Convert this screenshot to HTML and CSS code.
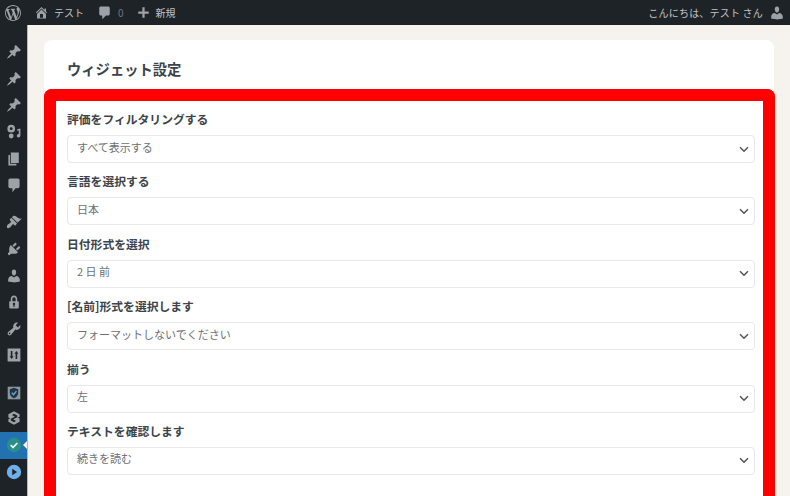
FILE: index.html
```html
<!DOCTYPE html>
<html lang="ja">
<head>
    <meta charset="UTF-8">
    <meta name="viewport" content="width=device-width, initial-scale=1.0">
    <title>ウィジェット設定</title>
    <link rel="stylesheet" href="styles.css">
</head>
<body>

    <header class="topbar">
        <div class="topbar-left">
            <svg class="wp-logo" viewBox="0 0 20 20"><path d="M20 10c0-5.51-4.49-10-10-10C4.48 0 0 4.49 0 10c0 5.52 4.48 10 10 10 5.51 0 10-4.48 10-10zM7.78 15.37L4.37 6.22c.55-.02 1.17-.08 1.17-.08.5-.06.44-1.13-.06-1.11 0 0-1.45.11-2.37.11-.18 0-.37 0-.58-.01C4.12 2.69 6.87 1.11 10 1.11c2.33 0 4.45.87 6.05 2.34-.68-.11-1.65.39-1.65 1.58 0 .74.45 1.36.9 2.1.35.61.55 1.36.55 2.46 0 1.49-1.4 5-1.4 5l-3.03-8.37c.54-.02.82-.17.82-.17.5-.05.44-1.25-.06-1.22 0 0-1.44.12-2.38.12-.87 0-2.33-.12-2.33-.12-.5-.03-.56 1.2-.06 1.22l.92.08 1.26 3.41zM17.41 10c.24-.64.74-1.87.43-4.25.7 1.29 1.05 2.71 1.05 4.25 0 3.29-1.73 6.24-4.4 7.78.97-2.59 1.94-5.2 2.92-7.78zM6.1 18.09C3.12 16.65 1.11 13.53 1.11 10c0-1.3.23-2.48.72-3.59C3.25 10.3 4.67 14.2 6.1 18.09zm4.03-6.63l2.58 6.98c-.86.29-1.76.45-2.71.45-.79 0-1.57-.11-2.29-.33.81-2.38 1.62-4.74 2.42-7.1z"/></svg>
            <span class="bar-item site">
                <svg class="bar-icon" viewBox="0 0 20 20"><path d="M16 8.5l1.53 1.53-1.06 1.06L10 4.62l-6.47 6.47-1.06-1.06L10 2.5l4 4v-2h2v4zm-6-2.46l6 5.99V18H4v-5.97zM12 17v-5H8v5h4z"/></svg>
                テスト
            </span>
            <span class="bar-item comments">
                <svg class="bar-icon" viewBox="0 0 20 20"><path d="M5 2h10c1.1 0 2 .9 2 2v8c0 1.1-.9 2-2 2h-3l-5 5v-5H5c-1.1 0-2-.9-2-2V4c0-1.1.9-2 2-2z"/></svg>
                <span class="count">0</span>
            </span>
            <span class="bar-item new">
                <svg class="bar-icon" viewBox="0 0 20 20"><path d="M17 8.5v3h-5.5V17h-3v-5.5H3v-3h5.5V3h3v5.5z"/></svg>
                新規
            </span>
        </div>
        <div class="howdy">
            こんにちは、テスト さん
            <svg class="avatar" viewBox="0 0 20 20"><path d="M10 9.25c-2.27 0-2.73-3.44-2.73-3.44C7 4.02 7.82 2 9.97 2c2.16 0 2.98 2.02 2.71 3.81 0 0-.41 3.44-2.68 3.44zm0 2.57L12.72 10c2.39 0 4.52 2.33 4.52 4.53v2.49s-3.65 1.13-7.24 1.13c-3.65 0-7.24-1.13-7.24-1.13v-2.49c0-2.25 1.94-4.48 4.47-4.48z"/></svg>
        </div>
    </header>

    <div class="layout">
        <nav class="sidebar">
            <div class="menu-group">
                <a class="menu-item"><svg viewBox="0 0 20 20"><path d="M10.44 3.02l1.82-1.82 6.36 6.35-1.83 1.82c-1.05-.68-2.48-.57-3.41.36l-.75.75c-.92.93-1.04 2.35-.35 3.41l-1.83 1.82-2.41-2.41-2.8 2.79c-.42.42-3.38 2.71-3.8 2.29s1.86-3.39 2.28-3.81l2.79-2.79L4.1 9.36l1.83-1.82c1.05.69 2.48.57 3.4-.36l.75-.75c.93-.92 1.05-2.35.36-3.41z"/></svg></a>
                <a class="menu-item"><svg viewBox="0 0 20 20"><path d="M10.44 3.02l1.82-1.82 6.36 6.35-1.83 1.82c-1.05-.68-2.48-.57-3.41.36l-.75.75c-.92.93-1.04 2.35-.35 3.41l-1.83 1.82-2.41-2.41-2.8 2.79c-.42.42-3.38 2.71-3.8 2.29s1.86-3.39 2.28-3.81l2.79-2.79L4.1 9.36l1.83-1.82c1.05.69 2.48.57 3.4-.36l.75-.75c.93-.92 1.05-2.35.36-3.41z"/></svg></a>
                <a class="menu-item"><svg viewBox="0 0 20 20"><path d="M10.44 3.02l1.82-1.82 6.36 6.35-1.83 1.82c-1.05-.68-2.48-.57-3.41.36l-.75.75c-.92.93-1.04 2.35-.35 3.41l-1.83 1.82-2.41-2.41-2.8 2.79c-.42.42-3.38 2.71-3.8 2.29s1.86-3.39 2.28-3.81l2.79-2.79L4.1 9.36l1.83-1.82c1.05.69 2.48.57 3.4-.36l.75-.75c.93-.92 1.05-2.35.36-3.41z"/></svg></a>
                <a class="menu-item"><svg viewBox="0 0 20 20"><path fill-rule="evenodd" d="M6.500 1a4.800 4.800 0 1 1 0 9.600 4.800 4.800 0 0 1 0-9.600zm0 3a1.800 1.800 0 1 0 0 3.600 1.800 1.800 0 0 0 0-3.600zM14 6.500l4-.8v8.800c0 1.400-1 2.500-2.300 2.500s-2.200-1-2.200-2.200 1-2.300 2.200-2.300c.1 0 .2 0 .3.1V8l-2 .4zM6.500 12a3 3 0 1 1 0 6 3 3 0 0 1 0-6z"/></svg></a>
                <a class="menu-item"><svg viewBox="0 0 20 20"><path d="M6 15V2h10v13H6zm-1 1h8v2H3V5h2v11z"/></svg></a>
                <a class="menu-item"><svg viewBox="0 0 20 20"><path d="M5 2h10c1.100 0 2 .9 2 2v8c0 1.100-.9 2-2 2h-3l-4 5v-5H5c-1.100 0-2-.9-2-2V4c0-1.100.9-2 2-2z"/></svg></a>
            </div>
            <div class="menu-group">
                <a class="menu-item"><svg viewBox="0 0 20 20"><path d="M14.48 11.060L7.410 3.990l1.500-1.500c.5-.56 2.300-.47 3.510.32 1.210.8 1.430 1.280 2.910 2.100 1.180.64 2.450 1.260 4.450.85zm-.71.71L6.700 4.700 4.930 6.470c-.39.39-.39 1.020 0 1.410l1.060 1.060c.39.39.39 1.030 0 1.420-.6.6-1.430 1.110-2.210 1.690-.35.26-.7.53-1.010.84C1.430 13.230.78 15.780 1.400 17.200c.06.14.1.18.21.29.64.63 3.040-.37 4.050-1.380.35-.35.66-.7.93-1.030.6-.74 1.060-1.510 1.630-2.090.39-.39 1.020-.39 1.410 0l1.060 1.060c.39.39 1.020.39 1.410 0z"/></svg></a>
                <a class="menu-item"><svg viewBox="0 0 20 20"><path d="M13.110 4.360L9.870 7.600 8 5.730l3.240-3.240c.35-.34 1.050-.2 1.560.32.52.51.66 1.210.31 1.550zm-8 1.770l.91-1.120 9.010 9.010-1.190.84c-.71.71-2.630 1.160-3.820 1.160H6.140L4.900 17.260c-.59.59-1.540.59-2.120 0-.59-.58-.59-1.530 0-2.120l1.240-1.240v-3.880c0-1.130.4-3.190 1.090-3.890zm7.260 3.970l3.240-3.240c.34-.35 1.040-.21 1.550.31.52.51.66 1.210.31 1.550l-3.240 3.250z"/></svg></a>
                <a class="menu-item"><svg viewBox="0 0 20 20"><path d="M10 9.250c-2.270 0-2.730-3.440-2.730-3.440C7 4.020 7.820 2 9.970 2c2.160 0 2.980 2.020 2.710 3.810 0 0-.41 3.440-2.680 3.440zm0 2.570L12.720 10c2.390 0 4.520 2.330 4.520 4.530v2.490s-3.650 1.130-7.240 1.130c-3.650 0-7.240-1.130-7.240-1.130v-2.490c0-2.250 1.940-4.480 4.470-4.480z"/></svg></a>
                <a class="menu-item"><svg viewBox="0 0 20 20"><path d="M14 9h1c.55 0 1 .45 1 1v7c0 .55-.45 1-1 1H5c-.55 0-1-.45-1-1v-7c0-.55.45-1 1-1h1V6c0-2.200 1.800-4 4-4s4 1.800 4 4v3zm-2 0V6c0-1.100-.9-2-2-2s-2 .9-2 2v3h4zm-1 7l-.36-2.150c.51-.24.86-.75.86-1.350 0-.83-.67-1.500-1.500-1.500s-1.500.67-1.500 1.500c0 .6.35 1.110.86 1.350L9 16h2z"/></svg></a>
                <a class="menu-item"><svg viewBox="0 0 20 20"><path d="M16.680 9.770c-1.340 1.340-3.300 1.670-4.950.99l-5.410 6.520c-.99.99-2.590.99-3.580 0s-.99-2.590 0-3.570l6.520-5.420c-.68-1.650-.35-3.610.99-4.950 1.280-1.280 3.120-1.620 4.720-1.060l-2.890 2.890 2.820 2.820 2.860-2.870c.53 1.580.18 3.390-1.080 4.650zM3.810 16.210c.4.39 1.040.39 1.430 0 .4-.4.4-1.040 0-1.430-.39-.4-1.030-.4-1.430 0-.39.39-.39 1.030 0 1.430z"/></svg></a>
                <a class="menu-item"><svg viewBox="0 0 20 20"><path fill-rule="evenodd" d="M2 2h16v16H2zM6 5v6.500H4.500L7 15l2.500-3.500H8V5zm6 10h2V8.500h1.500L13 5l-2.500 3.500H12z"/></svg></a>
            </div>
            <div class="menu-group">
                <a class="menu-item shield"><svg viewBox="0 0 20 20"><rect x="1" y="1" width="18" height="18" fill="#8a96a1"/><path d="M10 2.500l6 2v5.500c0 4-2.800 6.200-6 7.500-3.200-1.300-6-3.500-6-7.500V4.500z" fill="#26323d"/><path d="M6.800 9.500l2.500 2.800 4.200-5" fill="none" stroke="#5aaee8" stroke-width="2"/></svg></a>
                <a class="menu-item sync"><svg viewBox="0 0 20 20"><path d="M10 1.500l7 3.800v3l-3 1.500V7L10 4.800 7.500 6.200 11 8.500 6 11 3 9.500V5.300zM10 18.500l-7-3.800v-3l3-1.500V13l4 2.200 2.500-1.400L9 11.500l5-2.500 3 1.500v4.200z"/></svg></a>
                <a class="menu-item active"><svg viewBox="0 0 20 20"><circle cx="10" cy="10" r="9" fill="#2a8f86"/><path d="M5.800 10l3 3 5.400-5.500" fill="none" stroke="#e6f3f2" stroke-width="2.200"/></svg></a>
                <a class="menu-item"><svg viewBox="0 0 20 20"><circle cx="10" cy="10" r="9" fill="#6fb0ec"/><path d="M7.800 6l6 4-6 4z" fill="#1d2327"/></svg></a>
            </div>
        </nav>

        <main class="content">
            <div class="panel">
                <h2 class="panel-title">ウィジェット設定</h2>
                <form class="highlight">
                    <div class="field">
                        <label>評価をフィルタリングする</label>
                        <select><option>すべて表示する</option></select>
                    </div>
                    <div class="field">
                        <label>言語を選択する</label>
                        <select><option>日本</option></select>
                    </div>
                    <div class="field">
                        <label>日付形式を選択</label>
                        <select><option>2 日 前</option></select>
                    </div>
                    <div class="field">
                        <label>[名前]形式を選択します</label>
                        <select><option>フォーマットしないでください</option></select>
                    </div>
                    <div class="field">
                        <label>揃う</label>
                        <select><option>左</option></select>
                    </div>
                    <div class="field">
                        <label>テキストを確認します</label>
                        <select><option>続きを読む</option></select>
                    </div>
                </form>
            </div>
        </main>
    </div>

</body>
</html>
```

FILE: styles.css
```css
html, body {
    margin: 0;
    height: 496px;
    overflow: hidden;
}
body {
    background: #f6f3ef;
    font-family: "Noto Sans CJK JP", "Noto Sans", sans-serif;
    color: #3c434a;
}
.topbar {
    height: 25px;
    background: #1d2327;
    color: #c3c4c7;
    font-size: 10px;
    display: flex;
    justify-content: space-between;
    align-items: center;
    padding: 0 5px;
}
.topbar-left {
    display: flex;
    align-items: center;
}
.topbar svg {
    fill: #9ca2a7;
}
.wp-logo {
    width: 16px;
    height: 16px;
}
.bar-item {
    display: flex;
    align-items: center;
    gap: 5px;
}
.bar-icon {
    width: 15px;
    height: 15px;
}
.site {
    margin-left: 13px;
}
.comments {
    margin-left: 13px;
}
.comments .count {
    color: #70767c;
    margin-left: 1px;
}
.new {
    margin-left: 12px;
}
.howdy {
    display: flex;
    align-items: center;
    gap: 6px;
    letter-spacing: 0.2px;
}
.avatar {
    width: 16px;
    height: 16px;
}
.layout {
    display: flex;
    height: 471px;
}
.sidebar {
    width: 28px;
    background: #1d2327;
    padding-top: 14px;
    box-sizing: border-box;
    display: flex;
    flex-direction: column;
    gap: 10.6px;
    border-right: 1px solid #b8b8b4;
}
.menu-item {
    height: 26.6px;
    display: flex;
    align-items: center;
    justify-content: center;
    position: relative;
}
.menu-item svg {
    width: 16px;
    height: 16px;
    fill: #9ca2a7;
}
.menu-item.sync {
    height: 24px;
    fill: #c3c4c7;
}
.menu-item.shield svg {
    width: 14px;
    height: 14px;
}
.menu-item.active {
    background: #2271b1;
    margin-top: 2px;
}
.menu-item.active::after {
    content: "";
    position: absolute;
    right: 0;
    top: 50%;
    margin-top: -4px;
    border: 4px solid transparent;
    border-right-color: #f6f3ef;
    border-left: 0;
}
.content {
    flex: 1;
    padding: 15px 16px 0 16px;
}
.panel {
    background: #fff;
    border-radius: 8px 8px 0 0;
    height: 100%;
}
.panel-title {
    margin: 0;
    padding: 0 0 0 23px;
    height: 49px;
    box-sizing: border-box;
    line-height: 58px;
    font-size: 14.3px;
    font-weight: 700;
    color: #3c434a;
}
.highlight {
    border: 12px solid #f00;
    border-bottom: 0;
    border-radius: 8px 8px 0 0;
    margin-right: -1px;
    padding: 9px 8px 0 11px;
    height: 420px;
    box-sizing: border-box;
    background: #fff;
}
.field {
    margin-bottom: 9.4px;
}
.field label {
    display: block;
    font-size: 11.8px;
    font-weight: 700;
    line-height: 18px;
    margin-bottom: 7px;
    color: #3c434a;
}
.field select {
    display: block;
    width: 100%;
    height: 28px;
    box-sizing: border-box;
    appearance: none;
    border: 1px solid #e8e8ea;
    border-radius: 4px;
    background: #fff url("data:image/svg+xml,%3Csvg xmlns='http://www.w3.org/2000/svg' width='10' height='7' viewBox='0 0 10 7'%3E%3Cpath d='M1 1.200 5 5.200l4-4' fill='none' stroke='%23555' stroke-width='1.500'/%3E%3C/svg%3E") no-repeat right 5px center;
    padding: 0 9px 5px;
    font-family: inherit;
    font-size: 11px;
    color: #6b7075;
}
```
